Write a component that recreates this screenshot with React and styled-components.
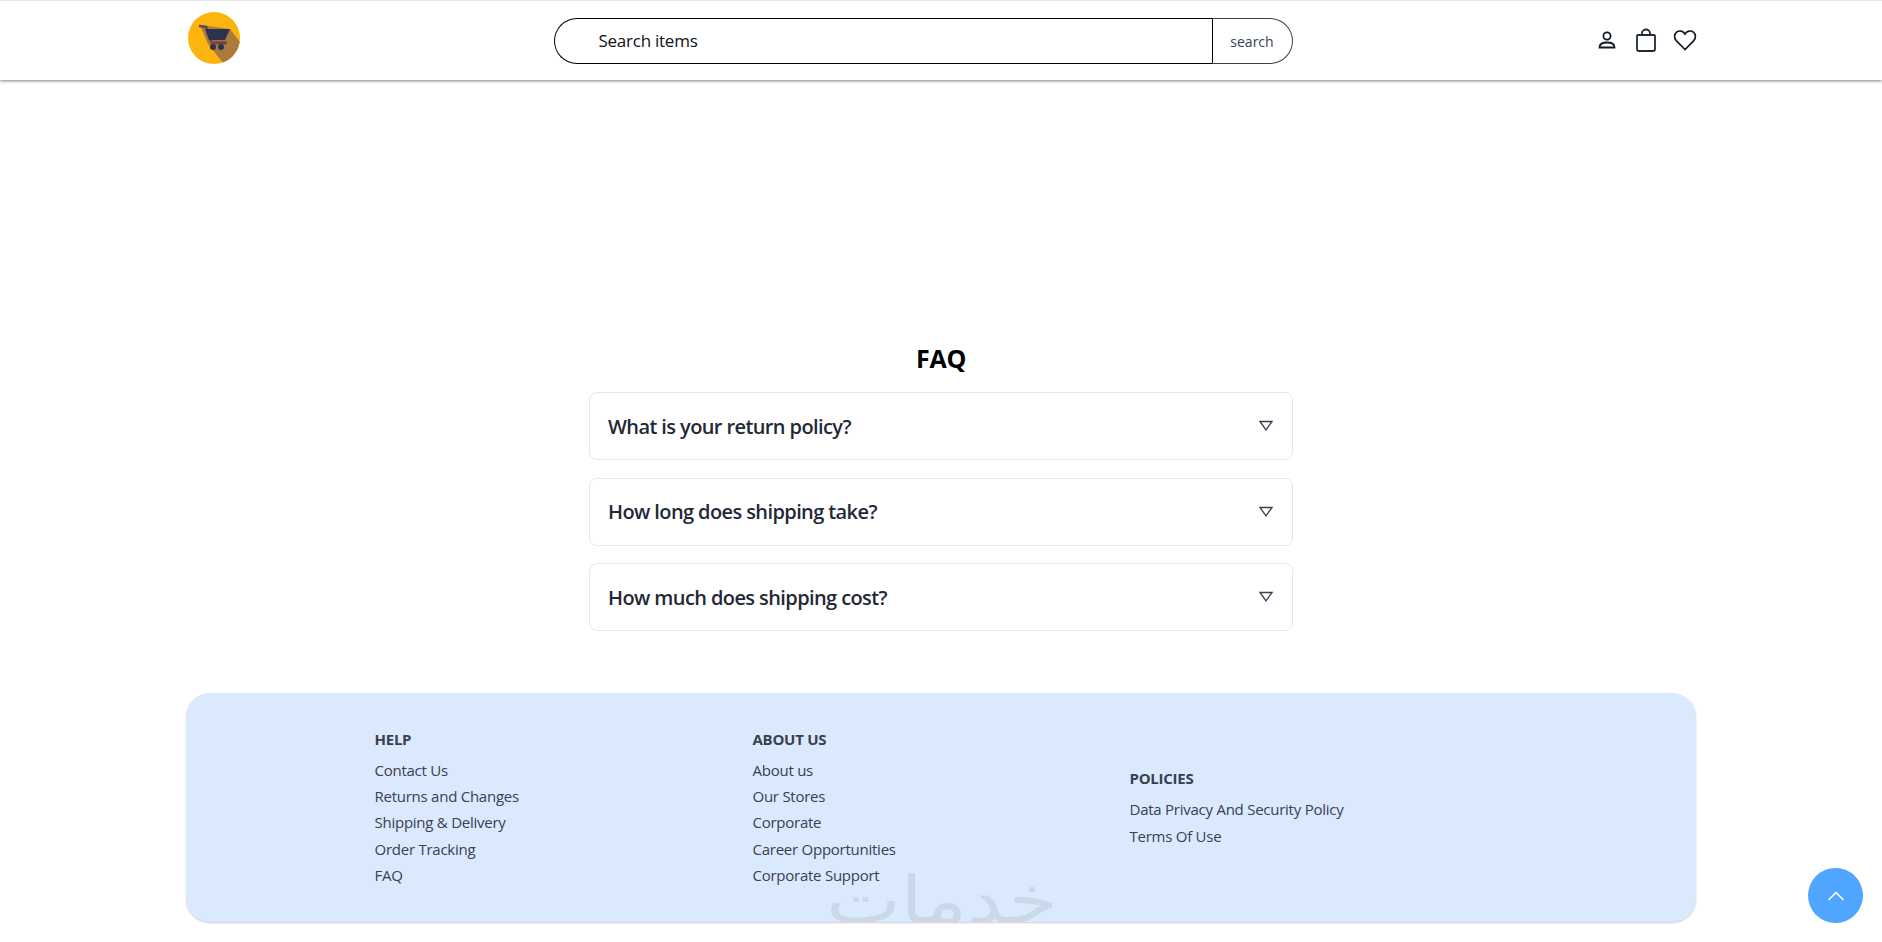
import React from "react";
import styled, { createGlobalStyle } from "styled-components";
import { ChevronUp } from "lucide-react";

const Global = createGlobalStyle`
  html, body { margin: 0; padding: 0; background: #fff; }
  body { font-family: "Open Sans", "Noto Sans", sans-serif; overflow: hidden; }
  * { box-sizing: border-box; }
`;
const Page = styled.div`display:flex;flex-direction:column;height:942px;`;
const Header = styled.header`
  height: 80px; flex:none; border-top:1px solid #e5e7eb; background:#fff;
  box-shadow: 0 1px 3px 0 rgba(0,0,0,.5);
  padding: 0 185px 0 188px; display:flex; align-items:center; justify-content:space-between;
`;
const Logo = styled.svg`width:52px;height:52px;display:block;margin-top:-6px;`;
const Search = styled.form`display:flex;width:739px;height:46px;margin:0 0 0 11px;`;
const SearchInput = styled.div`
  flex:1;border:1px solid #000;border-right:none;border-radius:23px 0 0 23px;
  padding-left:44px;display:flex;align-items:center;font-size:17px;color:#111;letter-spacing:-.25px;
`;
const SearchButton = styled.button`
  width:81px;border:1px solid #374151;border-left:1px solid #000;border-radius:0 23px 23px 0;
  background:#fff;font-family:inherit;font-size:14px;color:#374151;padding:2px 0 0;letter-spacing:0;
`;
const Icons = styled.div`display:flex;align-items:center;gap:15px;margin-bottom:1px;`;
const IconSvg = styled.svg`display:block;`;
const Main = styled.main`flex:1;display:flex;flex-direction:column;align-items:center;padding-top:262px;`;
const Title = styled.h1`margin:0 0 18px;font-size:25px;line-height:32px;font-weight:700;color:#000;letter-spacing:-.3px;`;
const List = styled.div`width:704px;display:flex;flex-direction:column;gap:17.500px;`;
const Item = styled.div`
  height:68px;border:1px solid #e5e7eb;border-radius:8px;padding:0 19px 0 18px;
  display:flex;align-items:center;justify-content:space-between;
`;
const Question = styled.span`font-size:20px;font-weight:600;color:#1f2937;letter-spacing:-.6px;`;
const Caret = styled.svg`width:14px;height:11px;margin-bottom:1px;`;
const Footer = styled.footer`
  position:relative;overflow:hidden;flex:none;width:1510px;height:229px;margin:0 0 20px 186px;
  background:#dbe9fe;border-radius:24px;box-shadow:0 1px 2px rgba(0,0,0,.2);
  padding:0 0 0 188.500px;display:grid;grid-template-columns:378px 377px 1fr;align-items:center;
`;
const Col = styled.div`display:flex;flex-direction:column;position:relative;z-index:1;`;
const ColTitle = styled.h4`margin:0 0 6px;font-size:15px;line-height:24px;font-weight:700;color:#374151;letter-spacing:-.25px;`;
const FootLink = styled.a`font-size:15px;line-height:26.3px;color:#374151;letter-spacing:-.25px;`;
const Mark = styled.div`
  position:absolute;left:640px;bottom:-12px;font-family:"DejaVu Sans",sans-serif;font-size:66px;line-height:66px;
  color:#cbd8e8;font-weight:400;transform:scaleX(1.2);transform-origin:left bottom;
`;
const Top = styled.button`
  position:fixed;left:1808px;top:868px;width:55px;height:55px;border:none;border-radius:50%;
  background:#4fa5ff;color:#fff;display:flex;align-items:center;justify-content:center;padding:0;
`;

const columns = [
  ["HELP", ["Contact Us","Returns and Changes","Shipping & Delivery","Order Tracking","FAQ"]],
  ["ABOUT US", ["About us","Our Stores","Corporate","Career Opportunities","Corporate Support"]],
  ["POLICIES", ["Data Privacy And Security Policy","Terms Of Use"]],
];
const questions = ["What is your return policy?","How long does shipping take?","How much does shipping cost?"];

export default function App() {
  return (
    <Page>
      <Global />
      <Header>
        <Logo viewBox="0 0 52 52">
          <defs><clipPath id="c"><circle cx="26" cy="26" r="26"/></clipPath></defs>
          <circle cx="26" cy="26" r="26" fill="#fdb40f"/>
          <path d="M12 13 L42 17 L52 30 L52 52 L36 52 L20 32Z" fill="#ab7a3d" clipPath="url(#c)"/>
          <path d="M11 14 L18 15 L24 31 L39 31" fill="none" stroke="#5a4a52" strokeWidth="2.5"/>
          <path d="M17 17 L42 17 L37 28 L21 28Z" fill="#2b3350"/>
          <path d="M23 29.5 H38" stroke="#a8482f" strokeWidth="1.4"/>
          <circle cx="25" cy="35" r="3" fill="#2b3350"/><circle cx="33" cy="35" r="3" fill="#2b3350"/>
        </Logo>
        <Search>
          <SearchInput>Search items</SearchInput>
          <SearchButton type="button">search</SearchButton>
        </Search>
        <Icons>
          <IconSvg width="24" height="24" viewBox="0 0 24 24" fill="none" stroke="#111827" strokeWidth="1.8">
            <circle cx="12" cy="8" r="3.6"/><path d="M4.5 19.500c0-3.500 3.500-5 7.500-5s7.500 1.500 7.500 5z"/>
          </IconSvg>
          <IconSvg width="24" height="26" viewBox="0 0 24 26" fill="none" stroke="#1f2937" strokeWidth="1.8">
            <path d="M4 8h16q1 0 1 1v13q0 2-2 2H5q-2 0-2-2V9q0-1 1-1z"/><path d="M8 8V6.500a4 4 0 0 1 8 0V8"/>
          </IconSvg>
          <IconSvg width="24" height="24" viewBox="0 0 24 24" fill="none" stroke="#111827" strokeWidth="1.7">
            <path d="M12 21.500 3.200 12.600C.8 10 1.200 6.200 3.600 4.200 6 2.300 10 2.600 12 6c2-3.400 6-3.700 8.400-1.800 2.400 2 2.800 5.800.4 8.400z"/>
          </IconSvg>
        </Icons>
      </Header>
      <Main>
        <Title>FAQ</Title>
        <List>
          {questions.map(q => (
            <Item key={q}>
              <Question>{q}</Question>
              <Caret viewBox="0 0 14 11" fill="none" stroke="#374151" strokeWidth="1.3">
                <path d="M1 1.500h12L7 9.800z"/>
              </Caret>
            </Item>
          ))}
        </List>
      </Main>
      <Footer>
        {columns.map(([t, links]) => (
          <Col key={t}>
            <ColTitle>{t}</ColTitle>
            {links.map(l => <FootLink key={l}>{l}</FootLink>)}
          </Col>
        ))}
        <Mark>خدمات</Mark>
      </Footer>
      <Top type="button"><ChevronUp size={28} strokeWidth={1.4} /></Top>
    </Page>
  );
}
